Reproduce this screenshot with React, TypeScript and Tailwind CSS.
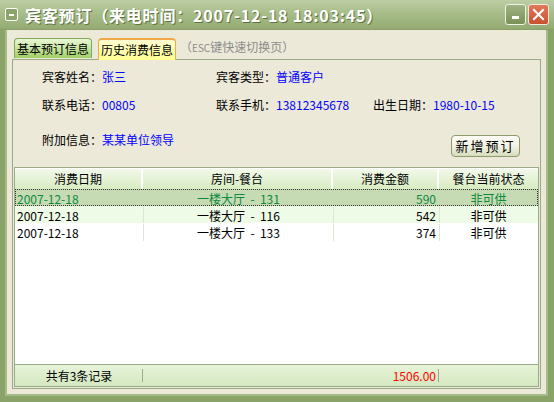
import React from 'react';

const FONT = { fontFamily: '"Noto Sans CJK SC", "Noto Sans", sans-serif' };

interface Row {
    date: string;
    room: string;
    amount: string;
    state: string;
}

const rows: Row[] = [
    { date: '2007-12-18', room: '一楼大厅  -  131', amount: '590', state: '非可供' },
    { date: '2007-12-18', room: '一楼大厅  -  116', amount: '542', state: '非可供' },
    { date: '2007-12-18', room: '一楼大厅  -  133', amount: '374', state: '非可供' },
];

// column widths: 128 / 190 / 106 / rest
const COLS = 'grid grid-cols-[128px_190px_106px_1fr]';

function Field({ label, value }: { label: string; value: string }) {
    return (
        <div className="flex items-center h-[20px] text-[12px] leading-[20px]">
            <span className="text-black">{label}</span>
            <span className="text-[#0000ff]">{value}</span>
        </div>
    );
}

function TitleBar() {
    return (
        <div className="h-[30px] flex items-center bg-gradient-to-b from-[#bccda4] via-[#a6bb87] to-[#93ab72] border-b border-[#8aa068] relative">
            {/* window icon */}
            <div className="ml-[5px] w-[13px] h-[13px] rounded-[2px] border border-white bg-[#8da36d] flex items-center justify-center">
                <div className="w-[5px] h-[2px] bg-white" />
            </div>
            <span className="ml-[7px] text-white font-bold text-[16px] tracking-[0.8px] [text-shadow:1px_1px_0_#5f7444]">
                宾客预订（来电时间：2007-12-18 18:03:45）
            </span>
            <div className="ml-auto mr-[5px] flex gap-[2px]">
                <div className="w-[21px] h-[21px] rounded-[3px] border border-[#eef2e4] bg-gradient-to-b from-[#9fb282] to-[#7c9158] flex items-end justify-center pb-[5px]">
                    <div className="w-[7px] h-[3px] bg-white" />
                </div>
                <div className="w-[21px] h-[21px] rounded-[3px] border border-[#f3e8e0] bg-gradient-to-b from-[#e0785a] to-[#c9502e] flex items-center justify-center">
                    <svg width="13" height="13" viewBox="0 0 13 13">
                        <path d="M2 2 L11 11 M11 2 L2 11" stroke="white" strokeWidth="2" strokeLinecap="square" />
                    </svg>
                </div>
            </div>
        </div>
    );
}

function Tabs() {
    return (
        <div className="h-[29px] flex items-end pl-[2px] text-[12px]">
            <div className="h-[20px] w-[78px] mb-[1px] rounded-t-[4px] border border-b-0 border-[#7fa85a] bg-gradient-to-b from-[#eaf7d4] to-[#a2d064] flex items-center justify-center text-black">
                基本预订信息
            </div>
            <div className="ml-[6px] h-[22px] w-[78px] rounded-t-[4px] border border-b-0 border-[#f0a848] border-t-2 bg-gradient-to-b from-[#fffcd0] to-[#ffff90] flex items-center justify-center text-black -mb-[1px] relative z-10">
                历史消费信息
            </div>
            <div className="ml-[4px] mb-[3px] text-[#8c8c8c] flex items-center">
                （<span className="text-[10px]">ESC</span>键快速切换页）
            </div>
        </div>
    );
}

function Table() {
    return (
        <div className="mx-[1px] mb-[1px] flex-1 flex flex-col bg-white border border-[#9aab88]">
            {/* header */}
            <div className={`${COLS} h-[21px] bg-gradient-to-b from-[#f2f9ea] to-[#d8ecc2] border-t border-white text-[12px] text-black`}>
                <div className="flex items-center justify-center border-r-2 border-white">消费日期</div>
                <div className="flex items-center justify-center border-r-2 border-white">房间-餐台</div>
                <div className="flex items-center justify-center border-r-2 border-white">消费金额</div>
                <div className="flex items-center justify-center">餐台当前状态</div>
            </div>
            {/* rows */}
            {rows.map((r, i) => {
                const selected = i === 0;
                const bg = selected ? 'bg-[#c6dab4]' : i % 2 === 1 ? 'bg-[#eefbe6]' : 'bg-white';
                const color = selected ? 'text-[#0a8a3c]' : 'text-black';
                const sep = selected ? 'border-r border-transparent' : 'border-r border-[#dbe6d4]';
                return (
                    <div
                        key={i}
                        className={`${COLS} h-[17px] text-[12px] leading-[17px] ${bg} ${color} ${selected ? 'border border-dotted border-[#333]' : 'border border-transparent'}`}
                    >
                        <div className={`pl-[1px] ${sep}`}>{r.date}</div>
                        <div className={`text-center whitespace-pre ${sep}`}>{r.room}</div>
                        <div className={`text-right pr-[3px] ${sep}`}>{r.amount}</div>
                        <div className="text-center">{r.state}</div>
                    </div>
                );
            })}
            <div className="flex-1" />
            {/* footer */}
            <div className={`${COLS} h-[22px] border-t border-[#9aab88] bg-gradient-to-b from-[#e6f3d8] to-[#d4e8c0] text-[12px]`}>
                <div className="flex items-center justify-center relative">
                    共有3条记录
                    <div className="absolute right-0 top-[4px] h-[13px] w-px bg-[#9aab88]" />
                </div>
                <div />
                <div className="flex items-center justify-end pr-[3px] text-[#ff0000] relative">
                    1506.00
                    <div className="absolute right-0 top-[4px] h-[13px] w-px bg-[#9aab88]" />
                </div>
                <div />
            </div>
        </div>
    );
}

export default function App() {
    return (
        <div className="w-[554px] h-[402px] overflow-hidden bg-[#8aa368] flex flex-col" style={FONT}>
            <TitleBar />
            <div className="flex-1 ml-[5px] mr-[6px] mb-[6px] bg-[#ece9d8] border-l-2 border-r-2 border-b-2 border-[#a6bc87] flex flex-col px-[5px]">
                <Tabs />
                <div className="flex-1 mb-[5px] border border-[#98aa88] bg-[#ece9d8] flex flex-col">
                    {/* guest info */}
                    <div className="h-[107px] pl-[29px] pt-[7px] flex flex-col gap-[8px] relative">
                        <div className="grid grid-cols-[174px_157px_1fr]">
                            <Field label="宾客姓名：" value="张三" />
                            <Field label="宾客类型：" value="普通客户" />
                        </div>
                        <div className="grid grid-cols-[174px_157px_1fr]">
                            <Field label="联系电话：" value="00805" />
                            <Field label="联系手机：" value="13812345678" />
                            <Field label="出生日期：" value="1980-10-15" />
                        </div>
                        <div className="flex items-center pr-[20px]">
                            <Field label="附加信息：" value="某某单位领导" />
                            <button className="ml-auto mt-[12px] w-[69px] h-[22px] rounded-[4px] border border-[#8c9c6c] bg-gradient-to-b from-[#fdfdf6] via-[#f2f2e4] to-[#d6dcbc] text-[13px] tracking-[2px] text-black flex items-center justify-center">
                                新增预订
                            </button>
                        </div>
                    </div>
                    <Table />
                </div>
            </div>
        </div>
    );
}
